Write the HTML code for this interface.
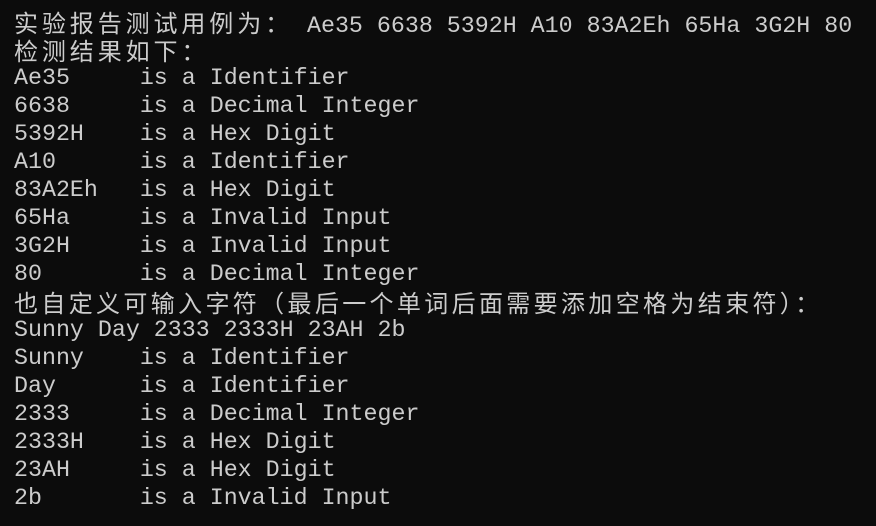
<!DOCTYPE html>
<html><head><meta charset="utf-8"><style>
html,body{margin:0;padding:0;background:#0c0c0c;width:876px;height:526px;overflow:hidden}
.t{padding:8px 0 0 14px;color:#cccccc;font-family:"Liberation Mono",monospace;font-size:23.3px;line-height:28px}
.t div{height:28px;white-space:pre}
.c{font-family:"Noto Sans CJK SC","Liberation Sans",sans-serif;font-size:24px;letter-spacing:3.9px}
.c2{letter-spacing:3.35px}
</style></head><body><div class="t"><div><span class="c">实验报告测试用例为：</span> Ae35 6638 5392H A10 83A2Eh 65Ha 3G2H 80</div><div><span class="c">检测结果如下：</span></div><div>Ae35     is a Identifier</div><div>6638     is a Decimal Integer</div><div>5392H    is a Hex Digit</div><div>A10      is a Identifier</div><div>83A2Eh   is a Hex Digit</div><div>65Ha     is a Invalid Input</div><div>3G2H     is a Invalid Input</div><div>80       is a Decimal Integer</div><div><span class="c c2">也自定义可输入字符（最后一个单词后面需要添加空格为结束符）：</span></div><div>Sunny Day 2333 2333H 23AH 2b</div><div>Sunny    is a Identifier</div><div>Day      is a Identifier</div><div>2333     is a Decimal Integer</div><div>2333H    is a Hex Digit</div><div>23AH     is a Hex Digit</div><div>2b       is a Invalid Input</div></div></body></html>
